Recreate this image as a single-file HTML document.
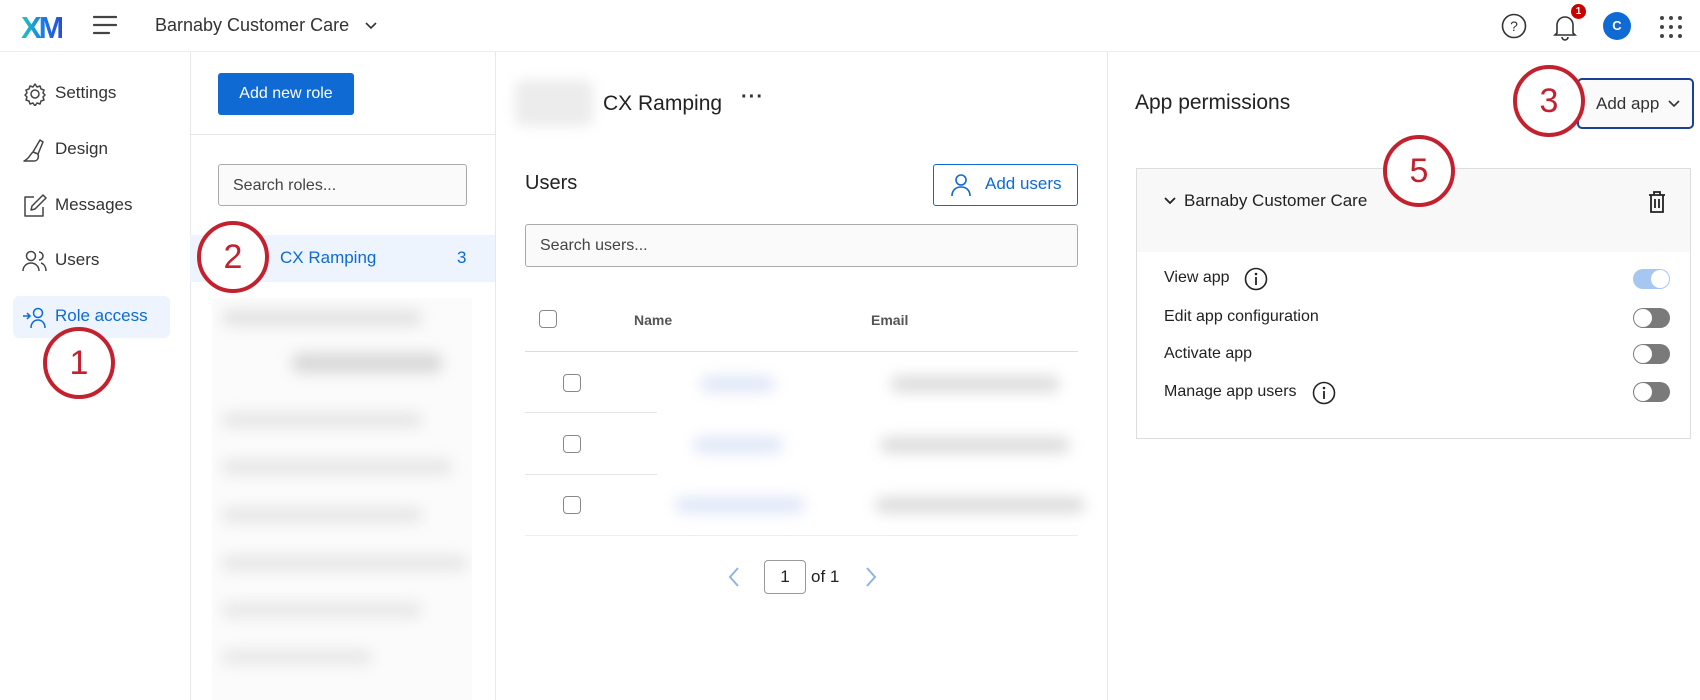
<!DOCTYPE html>
<html><head><meta charset="utf-8"><style>
*{box-sizing:border-box;margin:0;padding:0}
body{width:1700px;height:700px;overflow:hidden;background:#fff;font-family:"Liberation Sans",sans-serif;color:#222;position:relative}
.a{position:absolute}
.t{position:absolute;white-space:nowrap}
.circ{position:absolute;border:4px solid #c4212f;border-radius:50%;background:#fff;color:#c4212f;font-size:34px;display:flex;align-items:center;justify-content:center;width:72px;height:72px}
.blur{position:absolute;filter:blur(7px);border-radius:8px}
.tog{position:absolute;width:37px;height:20px;border-radius:10px;background:#7a7a7a}
.tog::after{content:"";position:absolute;left:1px;top:1px;width:18px;height:18px;border-radius:50%;background:#fff}
.tog.on{background:#a5c7f0}
.tog.on::after{left:18px}
.cb{position:absolute;width:18px;height:18px;border:1.5px solid #888;border-radius:4px;background:#fff}
</style></head><body>
<!-- header -->
<div class="a" style="left:0;top:0;width:1700px;height:52px;border-bottom:1px solid #eee;background:#fff"></div>
<div class="t" style="left:21px;top:10px;font-size:31px;font-weight:bold;letter-spacing:-3px;color:#1fa3d9;background:linear-gradient(90deg,#21c7c0,#1a73e8 60%,#2a4fd0);-webkit-background-clip:text;background-clip:text;-webkit-text-fill-color:transparent">XM</div>
<svg class="a" style="left:93px;top:15px" width="24" height="20"><path d="M1 2h22M1 10h22M1 18h15" stroke="#444" stroke-width="2.2" stroke-linecap="round"/></svg>
<div class="t" style="left:155px;top:15px;font-size:18px;color:#333">Barnaby Customer Care</div>
<svg class="a" style="left:364px;top:21px" width="14" height="10"><path d="M2 2l5 5 5-5" stroke="#333" stroke-width="1.6" fill="none"/></svg>
<svg class="a" style="left:1500px;top:12px" width="28" height="28"><circle cx="14" cy="14" r="11.5" stroke="#333" stroke-width="1.6" fill="none"/><text x="14" y="19" font-size="14" text-anchor="middle" fill="#333" font-family="Liberation Sans">?</text></svg>
<svg class="a" style="left:1551px;top:11px" width="28" height="30"><path d="M6 22V14a8 8 0 0116 0v8l2 2H4z M11 26a3 3 0 006 0" stroke="#333" stroke-width="1.6" fill="none"/></svg>
<div class="a" style="left:1571px;top:4px;width:15px;height:15px;border-radius:50%;background:#c00;color:#fff;font-size:10px;font-weight:bold;text-align:center;line-height:15px">1</div>
<div class="a" style="left:1603px;top:12px;width:28px;height:28px;border-radius:50%;background:#0f6ad4;color:#fff;font-size:13px;font-weight:bold;text-align:center;line-height:28px">C</div>
<svg class="a" style="left:1659px;top:15px" width="24" height="24"><g fill="#444"><circle cx="3" cy="3" r="2"/><circle cx="12" cy="3" r="2"/><circle cx="21" cy="3" r="2"/><circle cx="3" cy="12" r="2"/><circle cx="12" cy="12" r="2"/><circle cx="21" cy="12" r="2"/><circle cx="3" cy="21" r="2"/><circle cx="12" cy="21" r="2"/><circle cx="21" cy="21" r="2"/></g></svg>
<!-- sidebar -->
<div class="a" style="left:190px;top:52px;width:1px;height:648px;background:#e8e8e8"></div>
<svg class="a" style="left:23px;top:82px" width="24" height="24"><circle cx="12" cy="12" r="4" stroke="#444" stroke-width="1.5" fill="none"/><path d="M12 2l2 3 3-1 1 3 3 1-1 3 2 2-2 2 1 3-3 1-1 3-3-1-2 3-2-3-3 1-1-3-3-1 1-3-2-2 2-2-1-3 3-1 1-3 3 1z" stroke="#444" stroke-width="1.5" fill="none" stroke-linejoin="round"/></svg>
<div class="t" style="left:55px;top:83px;font-size:17px;color:#333">Settings</div>
<svg class="a" style="left:22px;top:137px" width="26" height="26"><path d="M2 24h10c4 0 5-4 4-7l-5-2c-3 2-3 6-9 9z M11 15l7-12 3 2-5 12" stroke="#444" stroke-width="1.5" fill="none" stroke-linejoin="round"/></svg>
<div class="t" style="left:55px;top:139px;font-size:17px;color:#333">Design</div>
<svg class="a" style="left:22px;top:193px" width="26" height="26"><path d="M12 4H3v19h18v-9 M9 17l1-4 11-11 3 3-11 11z" stroke="#444" stroke-width="1.5" fill="none" stroke-linejoin="round"/></svg>
<div class="t" style="left:55px;top:195px;font-size:17px;color:#333">Messages</div>
<svg class="a" style="left:22px;top:249px" width="26" height="24"><circle cx="9" cy="7" r="4.5" stroke="#444" stroke-width="1.5" fill="none"/><path d="M1 22c0-5 4-8 8-8s8 3 8 8 M17 3a4 4 0 010 8 M19 14c3 1 5 4 5 8" stroke="#444" stroke-width="1.5" fill="none"/></svg>
<div class="t" style="left:55px;top:250px;font-size:17px;color:#333">Users</div>
<div class="a" style="left:13px;top:296px;width:157px;height:42px;background:#edf4fd;border-radius:6px"></div>
<svg class="a" style="left:22px;top:307px" width="26" height="22"><path d="M1 9h7M5 6l3 3-3 3" stroke="#0f6ad4" stroke-width="1.5" fill="none"/><circle cx="16" cy="6" r="4.5" stroke="#0f6ad4" stroke-width="1.5" fill="none"/><path d="M9 21c0-5 3-8 7-8s7 3 7 8" stroke="#0f6ad4" stroke-width="1.5" fill="none"/></svg>
<div class="t" style="left:55px;top:306px;font-size:17px;color:#0f6ad4">Role access</div>
<!-- col2 -->
<div class="a" style="left:495px;top:52px;width:1px;height:648px;background:#e8e8e8"></div>
<div class="a" style="left:218px;top:73px;width:136px;height:42px;background:#0f6ad4;border-radius:3px;color:#fff;font-size:16px;text-align:center;line-height:42px">Add new role</div>
<div class="a" style="left:190px;top:134px;width:305px;height:1px;background:#e8e8e8"></div>
<div class="a" style="left:218px;top:164px;width:249px;height:42px;border:1px solid #aaa;border-radius:3px;background:#fafafa;font-size:16px;color:#444;padding:12px 14px">Search roles...</div>
<div class="a" style="left:190px;top:235px;width:305px;height:47px;background:#edf4fd"></div>
<div class="t" style="left:280px;top:248px;font-size:17px;color:#0f6ad4">CX Ramping</div>
<div class="t" style="left:457px;top:248px;font-size:17px;color:#0f6ad4">3</div>
<div class="a" style="left:212px;top:298px;width:260px;height:402px;background:#fbfbfb;overflow:hidden">
<div class="blur" style="left:10px;top:12px;width:200px;height:16px;background:#e2e2e2"></div>
<div class="blur" style="left:80px;top:55px;width:150px;height:20px;background:#d8d8d8"></div>
<div class="blur" style="left:10px;top:115px;width:200px;height:14px;background:#e4e4e4"></div>
<div class="blur" style="left:10px;top:162px;width:230px;height:14px;background:#e4e4e4"></div>
<div class="blur" style="left:10px;top:210px;width:200px;height:14px;background:#e4e4e4"></div>
<div class="blur" style="left:10px;top:258px;width:245px;height:14px;background:#e4e4e4"></div>
<div class="blur" style="left:10px;top:305px;width:200px;height:14px;background:#e6e6e6"></div>
<div class="blur" style="left:10px;top:352px;width:150px;height:14px;background:#e6e6e6"></div>
</div>
<!-- col3 -->
<div class="a" style="left:1107px;top:52px;width:1px;height:648px;background:#e8e8e8"></div>
<div class="blur" style="left:515px;top:80px;width:78px;height:46px;background:#ececec;filter:blur(6px)"></div>
<div class="t" style="left:603px;top:92px;font-size:21px;color:#222">CX Ramping</div>
<div class="t" style="left:741px;top:86px;font-size:20px;color:#333;letter-spacing:1px;font-weight:bold">···</div>
<div class="t" style="left:525px;top:172px;font-size:20px;color:#222">Users</div>
<div class="a" style="left:933px;top:164px;width:145px;height:42px;border:1.5px solid #0f6ad4;border-radius:3px"></div>
<svg class="a" style="left:950px;top:173px" width="22" height="24"><circle cx="11" cy="7" r="5" stroke="#0f6ad4" stroke-width="1.6" fill="none"/><path d="M2 23c0-6 4-9 9-9s9 3 9 9" stroke="#0f6ad4" stroke-width="1.6" fill="none"/></svg>
<div class="t" style="left:985px;top:174px;font-size:17px;color:#0f6ad4">Add users</div>
<div class="a" style="left:525px;top:224px;width:553px;height:43px;border:1px solid #aaa;border-radius:3px;background:#fafafa;font-size:16px;color:#444;padding:12px 14px">Search users...</div>
<div class="cb" style="left:539px;top:310px"></div>
<div class="t" style="left:634px;top:312px;font-size:14px;font-weight:bold;color:#555">Name</div>
<div class="t" style="left:871px;top:312px;font-size:14px;font-weight:bold;color:#555">Email</div>
<div class="a" style="left:525px;top:351px;width:553px;height:1px;background:#ddd"></div>
<div class="cb" style="left:563px;top:374px"></div>
<div class="cb" style="left:563px;top:435px"></div>
<div class="cb" style="left:563px;top:496px"></div>
<div class="a" style="left:525px;top:412px;width:132px;height:1px;background:#e5e5e5"></div>
<div class="a" style="left:525px;top:474px;width:132px;height:1px;background:#e5e5e5"></div>
<div class="a" style="left:525px;top:535px;width:553px;height:1px;background:#eee"></div>
<div class="blur" style="left:700px;top:376px;width:75px;height:16px;background:#dfe6f7"></div>
<div class="blur" style="left:693px;top:437px;width:90px;height:16px;background:#dfe6f7"></div>
<div class="blur" style="left:675px;top:497px;width:130px;height:16px;background:#dfe6f7"></div>
<div class="blur" style="left:890px;top:376px;width:170px;height:16px;background:#dcdcdc"></div>
<div class="blur" style="left:880px;top:437px;width:190px;height:16px;background:#dcdcdc"></div>
<div class="blur" style="left:875px;top:497px;width:210px;height:16px;background:#dcdcdc"></div>
<svg class="a" style="left:727px;top:566px" width="14" height="22"><path d="M11 2L3 11l8 9" stroke="#8fb4ea" stroke-width="2" fill="none"/></svg>
<div class="a" style="left:764px;top:560px;width:42px;height:34px;border:1px solid #999;border-radius:4px;font-size:17px;text-align:center;line-height:32px">1</div>
<div class="t" style="left:811px;top:567px;font-size:17px">of 1</div>
<svg class="a" style="left:864px;top:566px" width="14" height="22"><path d="M3 2l8 9-8 9" stroke="#8fb4ea" stroke-width="2" fill="none"/></svg>
<!-- col4 -->
<div class="t" style="left:1135px;top:91px;font-size:21px;color:#222">App permissions</div>
<div class="a" style="left:1577px;top:78px;width:117px;height:51px;border:2px solid #1d3f94;border-radius:5px;background:#fafafa"></div>
<div class="t" style="left:1596px;top:94px;font-size:17px;color:#333">Add app</div>
<svg class="a" style="left:1667px;top:99px" width="14" height="10"><path d="M2 2l5 5 5-5" stroke="#333" stroke-width="1.6" fill="none"/></svg>
<div class="a" style="left:1136px;top:168px;width:555px;height:271px;border:1px solid #ddd"></div>
<div class="a" style="left:1137px;top:169px;width:553px;height:83px;background:#f8f8f8"></div>
<svg class="a" style="left:1163px;top:196px" width="14" height="10"><path d="M2 2l5 5 5-5" stroke="#222" stroke-width="1.8" fill="none"/></svg>
<div class="t" style="left:1184px;top:191px;font-size:17px;color:#222">Barnaby Customer Care</div>
<svg class="a" style="left:1647px;top:189px" width="20" height="26"><path d="M2 6h16 M7 6V3h6v3 M4 6v17h12V6 M8 10v9 M12 10v9" stroke="#222" stroke-width="1.8" fill="none"/></svg>
<div class="t" style="left:1164px;top:269px;font-size:16px;color:#222">View app</div>
<svg class="a" style="left:1244px;top:267px" width="24" height="24"><circle cx="12" cy="12" r="10.5" stroke="#222" stroke-width="1.6" fill="none"/><circle cx="12" cy="7" r="1.3" fill="#222"/><path d="M12 10v8" stroke="#222" stroke-width="1.8"/></svg>
<div class="t" style="left:1164px;top:308px;font-size:16px;color:#222">Edit app configuration</div>
<div class="t" style="left:1164px;top:345px;font-size:16px;color:#222">Activate app</div>
<div class="t" style="left:1164px;top:383px;font-size:16px;color:#222">Manage app users</div>
<svg class="a" style="left:1312px;top:381px" width="24" height="24"><circle cx="12" cy="12" r="10.5" stroke="#222" stroke-width="1.6" fill="none"/><circle cx="12" cy="7" r="1.3" fill="#222"/><path d="M12 10v8" stroke="#222" stroke-width="1.8"/></svg>
<div class="tog on" style="left:1633px;top:269px"></div>
<div class="tog" style="left:1633px;top:308px"></div>
<div class="tog" style="left:1633px;top:344px"></div>
<div class="tog" style="left:1633px;top:382px"></div>
<!-- annotation circles -->
<div class="circ" style="left:43px;top:327px">1</div>
<div class="circ" style="left:197px;top:221px">2</div>
<div class="circ" style="left:1513px;top:65px">3</div>
<div class="circ" style="left:1383px;top:135px">5</div>
</body></html>
